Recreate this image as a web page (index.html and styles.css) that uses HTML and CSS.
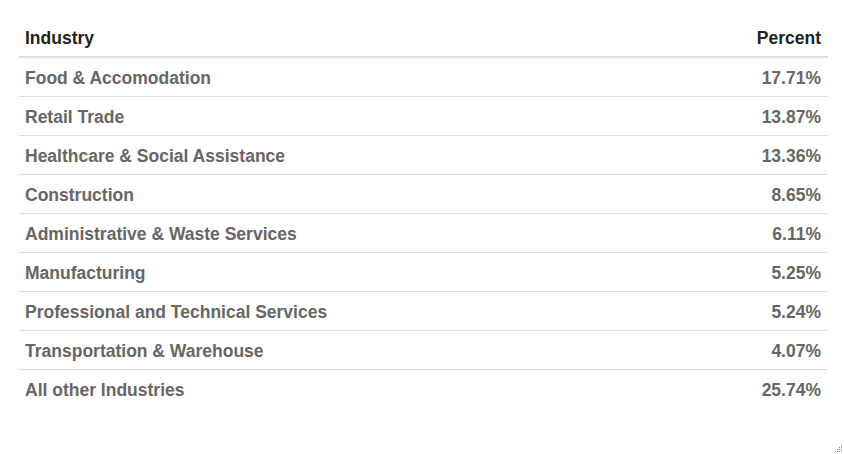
FILE: index.html
```html
<!DOCTYPE html>
<html>
<head>
<meta charset="utf-8">
<link rel="stylesheet" href="styles.css">
</head>
<body>
<div class="wrap">
  <table class="tbl">
    <thead>
      <tr><th class="name">Industry</th><th class="pct">Percent</th></tr>
    </thead>
    <tbody>
      <tr><td class="name">Food &amp; Accomodation</td><td class="pct">17.71%</td></tr>
      <tr><td class="name">Retail Trade</td><td class="pct">13.87%</td></tr>
      <tr><td class="name">Healthcare &amp; Social Assistance</td><td class="pct">13.36%</td></tr>
      <tr><td class="name">Construction</td><td class="pct">8.65%</td></tr>
      <tr><td class="name">Administrative &amp; Waste Services</td><td class="pct">6.11%</td></tr>
      <tr><td class="name">Manufacturing</td><td class="pct">5.25%</td></tr>
      <tr><td class="name">Professional and Technical Services</td><td class="pct">5.24%</td></tr>
      <tr><td class="name">Transportation &amp; Warehouse</td><td class="pct">4.07%</td></tr>
      <tr><td class="name">All other Industries</td><td class="pct">25.74%</td></tr>
    </tbody>
  </table>
  <svg class="grip" width="10" height="10" viewBox="0 0 10 10">
    <g fill="#888">
      <rect x="8" y="2" width="1" height="1"/>
      <rect x="6" y="4" width="1" height="1"/><rect x="8" y="4" width="1" height="1"/>
      <rect x="4" y="6" width="1" height="1"/><rect x="6" y="6" width="1" height="1"/><rect x="8" y="6" width="1" height="1"/>
      <rect x="2" y="8" width="1" height="1"/><rect x="4" y="8" width="1" height="1"/><rect x="6" y="8" width="1" height="1"/><rect x="8" y="8" width="1" height="1"/>
    </g>
  </svg>
</div>
</body>
</html>
```
FILE: styles.css
```css
html, body {
  margin: 0;
  padding: 0;
  background: #fff;
}
.wrap {
  position: relative;
  width: 844px;
  height: 454px;
  padding: 19px 16px 0 19px;
  box-sizing: border-box;
}
.tbl {
  width: 809px;
  border-collapse: collapse;
  font-family: "Liberation Sans", Arial, sans-serif;
  font-weight: bold;
  font-size: 17.5px;
  line-height: 20px;
}
.tbl th {
  height: 36px;
  color: #222;
  border-bottom: 2px solid #ddd;
  padding: 1px 7px 0 6px;
  vertical-align: middle;
}
.tbl td {
  height: 37px;
  color: #666;
  border-bottom: 1px solid #ddd;
  padding: 1px 7px 0 6px;
  vertical-align: middle;
}
.tbl tbody tr:last-child td {
  border-bottom: none;
}
.name { text-align: left; }
.pct { text-align: right; }
.grip {
  position: absolute;
  right: 1px;
  bottom: 1px;
}
```
